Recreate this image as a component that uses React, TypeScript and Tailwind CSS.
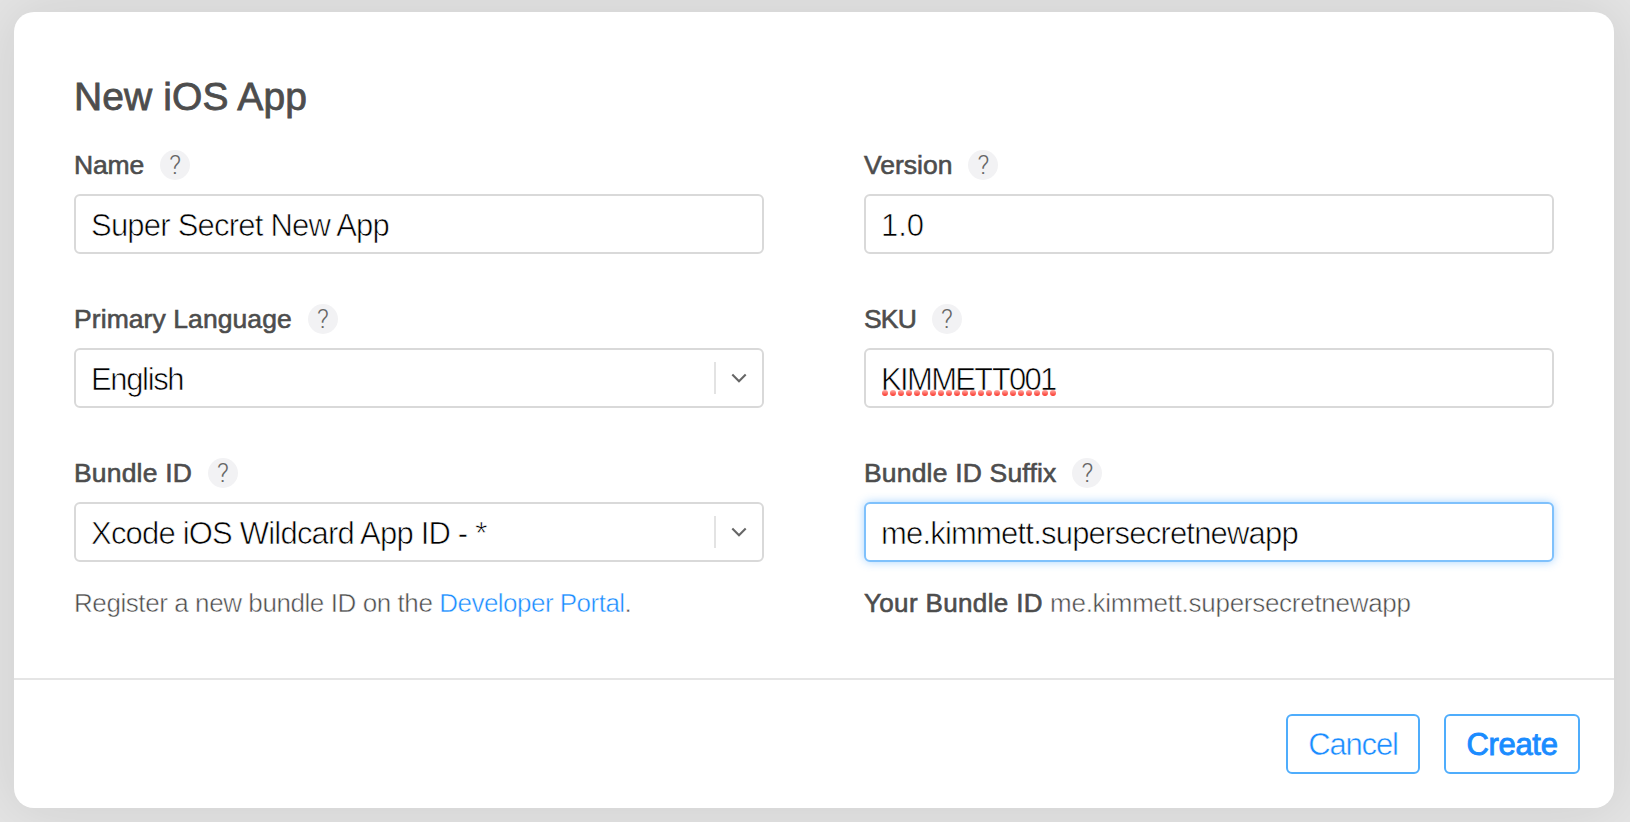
import React from "react";

const light = "[-webkit-text-stroke:0.65px_#fff]";
const lightSmall = "[-webkit-text-stroke:0.5px_#fff]";
const medium = "[-webkit-text-stroke:0.6px_#4d4d4d]";

function Label({ text, tracking }: { text: string; tracking: string }) {
  return (
    <div className="flex h-[30px] items-center gap-4">
      <label className={`text-[26.5px] leading-[30px] whitespace-nowrap ${medium} ${tracking}`}>{text}</label>
      <span className="flex size-[30px] items-center justify-center rounded-full bg-[#f2f2f4] font-[Roboto] text-[26px] leading-[30px] font-light text-[#666]">
        ?
      </span>
    </div>
  );
}

function Box({ children, focused = false }: { children: React.ReactNode; focused?: boolean }) {
  return (
    <div
      className={`mt-[14px] flex h-[60px] items-center rounded-[6px] border-2 bg-white pl-[15px] text-[31px] leading-[34px] text-black ${
        focused ? "border-[#7fc1fc] shadow-[0_0_10px_rgba(60,160,255,0.45)]" : "border-[#d9d9d9]"
      }`}
    >
      {children}
    </div>
  );
}

function Value({ text, tracking }: { text: string; tracking: string }) {
  return <span className={`pt-[4px] whitespace-pre ${light} ${tracking}`}>{text}</span>;
}

function SelectArrow() {
  return (
    <span className="ml-auto flex h-8 w-[48px] items-center border-l-2 border-[#e3e3e3] pl-[15px]">
      <svg width="16" height="12" viewBox="0 0 16 12" fill="none" stroke="#666" strokeWidth="2.1">
        <path d="M1.3 2.5 8 9.2 14.7 2.5" />
      </svg>
    </span>
  );
}

function SpellingDots() {
  return (
    <svg className="absolute top-[31px] left-[1px]" width="176" height="8" viewBox="0 0 176 8">
      <defs>
        <linearGradient id="dot" x1="0" y1="0" x2="0" y2="1">
          <stop offset="0" stopColor="#ffaca6" />
          <stop offset="1" stopColor="#fb3529" />
        </linearGradient>
      </defs>
      {Array.from({ length: 22 }, (_, i) => (
        <circle key={i} cx={3 + i * 8} cy="3" r="3" fill="url(#dot)" />
      ))}
    </svg>
  );
}

export default function App() {
  return (
    <div className="h-[822px] w-[1630px] overflow-hidden bg-[#e4e4e4] px-[14px] pt-3 font-['Liberation_Sans',Arial,sans-serif] text-[#4d4d4d]">
      <main className="flex h-[796px] w-[1600px] flex-col rounded-[20px] bg-white shadow-[0_0_60px_rgba(0,0,0,0.1)]">
        <div className="h-[666px] px-[60px] pt-[63px]">
          <h1 className="h-[44px] text-[39px] leading-[44px] tracking-[0.1px] [-webkit-text-stroke:0.8px_#4d4d4d]">
            New iOS App
          </h1>
          <div className="mt-[31px] grid grid-cols-[690px_690px] gap-x-[100px] gap-y-[50px]">
            <div>
              <Label text="Name" tracking="tracking-[-0.16px]" />
              <Box><Value text="Super Secret New App" tracking="tracking-[-0.78px]" /></Box>
            </div>
            <div>
              <Label text="Version" tracking="tracking-[0px]" />
              <Box><Value text="1.0" tracking="tracking-[-0.1px]" /></Box>
            </div>
            <div>
              <Label text="Primary Language" tracking="tracking-[0.08px]" />
              <Box><Value text="English" tracking="tracking-[-1.35px]" /><SelectArrow /></Box>
            </div>
            <div>
              <Label text="SKU" tracking="tracking-[-0.84px]" />
              <Box>
                <span className="relative flex">
                  <Value text="KIMMETT001" tracking="tracking-[-1.65px]" />
                  <SpellingDots />
                </span>
              </Box>
            </div>
            <div>
              <Label text="Bundle ID" tracking="tracking-[0.18px]" />
              <Box><Value text="Xcode iOS Wildcard App ID - *" tracking="tracking-[-0.8px]" /><SelectArrow /></Box>
              <p className={`mt-[26px] text-[26px] leading-[30px] whitespace-nowrap ${lightSmall}`}>
                <span className="tracking-[-0.42px]">Register a new bundle ID on the </span>
                <a className="tracking-[-0.52px] text-[#1a8cff]">Developer Portal</a>.
              </p>
            </div>
            <div>
              <Label text="Bundle ID Suffix" tracking="tracking-[0.18px]" />
              <Box focused><Value text="me.kimmett.supersecretnewapp" tracking="tracking-[-0.8px]" /></Box>
              <p className="mt-[26px] text-[26px] leading-[30px] whitespace-nowrap">
                <span className={`tracking-[0.35px] ${medium}`}>Your Bundle ID</span>{" "}
                <span className={`tracking-[-0.28px] ${lightSmall}`}>me.kimmett.supersecretnewapp</span>
              </p>
            </div>
          </div>
        </div>
        <footer className="flex grow justify-end gap-6 border-t-2 border-[#e5e5e5] pt-[34px] pr-[34px] text-[31px] leading-[34px] text-[#1a8cff]">
          <button className={`h-[60px] w-[134px] rounded-[6px] border-2 border-[#4fadfc] pt-px tracking-[-1.2px] ${lightSmall}`}>
            Cancel
          </button>
          <button className="h-[60px] w-[136px] rounded-[6px] border-2 border-[#4fadfc] pt-px tracking-[-0.3px] [-webkit-text-stroke:0.9px_#1a8cff]">
            Create
          </button>
        </footer>
      </main>
    </div>
  );
}
